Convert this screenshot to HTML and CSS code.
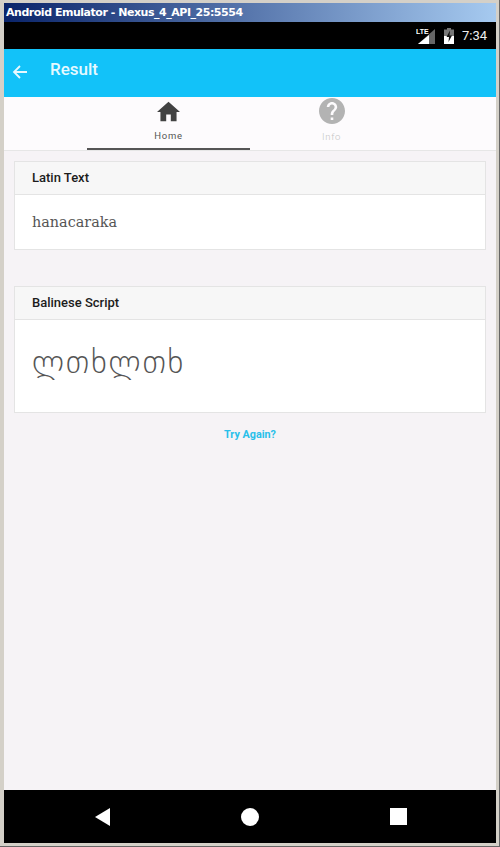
FILE: index.html
```html
<!DOCTYPE html>
<html lang="en">
<head>
<meta charset="utf-8">
<title>Android Emulator</title>
<link rel="stylesheet" href="styles.css">
</head>
<body>
<div class="window">
  <div class="titlebar">Android Emulator - Nexus_4_API_25:5554</div>
  <div class="statusbar">
    <svg class="status-signal" viewBox="0 0 20 17"><text class="lte" x="0" y="7">LTE</text><path d="M19 2V17H2z" fill="#666"/><path d="M13 8V17H2z" fill="#fff"/></svg>
    <svg class="status-battery" viewBox="0 0 10 16"><path d="M3 0h4v1.500h3V16H0V1.500h3z" fill="#777"/><path d="M0 8h10v8H0z" fill="#fff"/><path d="M6 2.500L2.500 9H5l-.5 5L8 7.500H5.500z" fill="#111"/></svg>
    <span class="clock">7:34</span>
  </div>
  <header class="appbar">
    <svg class="back" viewBox="0 0 16 16"><path d="M15 8H2M8 2L2 8l6 6" fill="none" stroke="#e6f9ff" stroke-width="1.800"/></svg>
    <span class="apptitle">Result</span>
  </header>
  <nav class="tabs">
    <div class="tab tab-active">
      <svg class="tab-home" viewBox="2 3 20 17"><path d="M10 20v-6h4v6h5v-8h3L12 3 2 12h3v8z" fill="#424242"/></svg>
      <span class="tab-label">Home</span>
    </div>
    <div class="tab">
      <svg class="tab-help" viewBox="2 2 20 20"><path d="M12 2C6.480 2 2 6.480 2 12s4.480 10 10 10 10-4.480 10-10S17.520 2 12 2zm1 17h-2v-2h2v2zm2.070-7.750l-.9.920C13.450 12.900 13 13.500 13 15h-2v-.5c0-1.100.45-2.100 1.170-2.830l1.240-1.260c.37-.36.59-.86.59-1.410 0-1.100-.9-2-2-2s-2 .9-2 2H8c0-2.210 1.790-4 4-4s4 1.790 4 4c0 .88-.36 1.680-.93 2.250z" fill="#b3b3b3"/></svg>
      <span class="tab-label tab-label-off">Info</span>
    </div>
  </nav>
  <main class="content">
    <section class="card card-latin">
      <h2 class="card-head">Latin Text</h2>
      <div class="card-body latin-body">hanacaraka</div>
    </section>
    <section class="card card-script">
      <h2 class="card-head">Balinese Script</h2>
      <!-- No Balinese font is installed: Georgian letters stand in as the closest visual match. The label carries the actual reading. -->
      <div class="card-body script-body" aria-label="hanacaraka">ლთხლთხ</div>
    </section>
    <a class="retry">Try Again?</a>
  </main>
  <footer class="navbar">
    <svg class="nav-back" viewBox="0 0 15 18"><path d="M15 0V18L0 9z" fill="#fff"/></svg>
    <span class="nav-home"></span>
    <span class="nav-recent"></span>
  </footer>
</div>
</body>
</html>
```
FILE: styles.css
```css
html, body { margin: 0; padding: 0; }
body { width: 500px; height: 847px; overflow: hidden; font-family: Roboto, sans-serif; }
.window { box-sizing: border-box; width: 500px; height: 847px; padding: 3px 3px 3px 4px; background: #d4d0c8; display: flex; flex-direction: column; border-right: 1px solid #666; border-bottom: 1px solid #666; }
.titlebar { height: 19px; flex: none; background: linear-gradient(90deg, #0a246a, #a6caf0); color: #fff; font: bold 11px/19px "DejaVu Sans", sans-serif; letter-spacing: -0.47px; padding-left: 2px; white-space: nowrap; }
.statusbar { height: 27px; flex: none; background: #000; display: flex; align-items: center; justify-content: flex-end; color: #eee; }
.status-signal { width: 20px; height: 17px; margin-right: 8px; }
.lte { font: bold 7px "Liberation Sans", sans-serif; fill: #fff; }
.status-battery { width: 10px; height: 16px; margin-right: 8px; }
.clock { font-size: 13px; margin-right: 9px; }
.appbar { height: 48px; flex: none; background: #12c2f9; display: flex; align-items: center; color: #e6f9ff; }
.back { width: 16px; height: 16px; margin: 0 0 2px 8px; }
.apptitle { font-size: 17px; font-weight: 500; margin: 0 0 8px 22px; }
.tabs { height: 53px; flex: none; background: #fdfbfd; display: flex; justify-content: center; border-bottom: 1px solid #e6e6e6; }
.tab { width: 163px; box-sizing: border-box; display: flex; flex-direction: column; align-items: center; }
.tab-active { border-bottom: 2px solid #555; }
.tab-home { width: 23px; height: 23px; margin-top: 3px; }
.tab-help { width: 26px; height: 26px; margin-top: 1px; }
.tab-label { font-size: 9.500px; letter-spacing: 0.7px; color: #555; margin-top: 7px; line-height: 12px; }
.tab-label-off { color: #c4c4c4; margin-top: 7px; font-weight: 300; }
.content { flex: 1; background: #f6f3f6; padding: 10px 10px 0; display: flex; flex-direction: column; }
.card { background: #fff; border: 1px solid #e4e4e4; box-sizing: border-box; }
.card-latin { height: 89px; margin-bottom: 36px; }
.card-script { height: 127px; }
.card-head { margin: 0; height: 33px; box-sizing: border-box; background: #f7f7f7; border-bottom: 1px solid #e4e4e4; font-size: 13px; font-weight: 500; color: #1c1c1c; line-height: 31px; padding-left: 17px; }
.card-body { padding-left: 17px; color: #555; }
.latin-body { font-family: "DejaVu Serif", serif; font-size: 14.400px; line-height: 54px; }
.script-body { font-family: "DejaVu Sans", sans-serif; font-size: 33px; font-weight: 200; letter-spacing: 1.800px; line-height: 84px; white-space: nowrap; }
.retry { align-self: center; margin-top: 15px; font-size: 10.800px; font-weight: 700; color: #29c0ea; line-height: 14px; }
.navbar { height: 53px; flex: none; background: #000; display: flex; align-items: center; justify-content: center; }
.nav-back { width: 15px; height: 18px; margin: 0 131px 0 2px; }
.nav-home { width: 18px; height: 18px; border-radius: 50%; background: #fff; margin-right: 131px; }
.nav-recent { width: 17px; height: 17px; background: #fff; }
```
